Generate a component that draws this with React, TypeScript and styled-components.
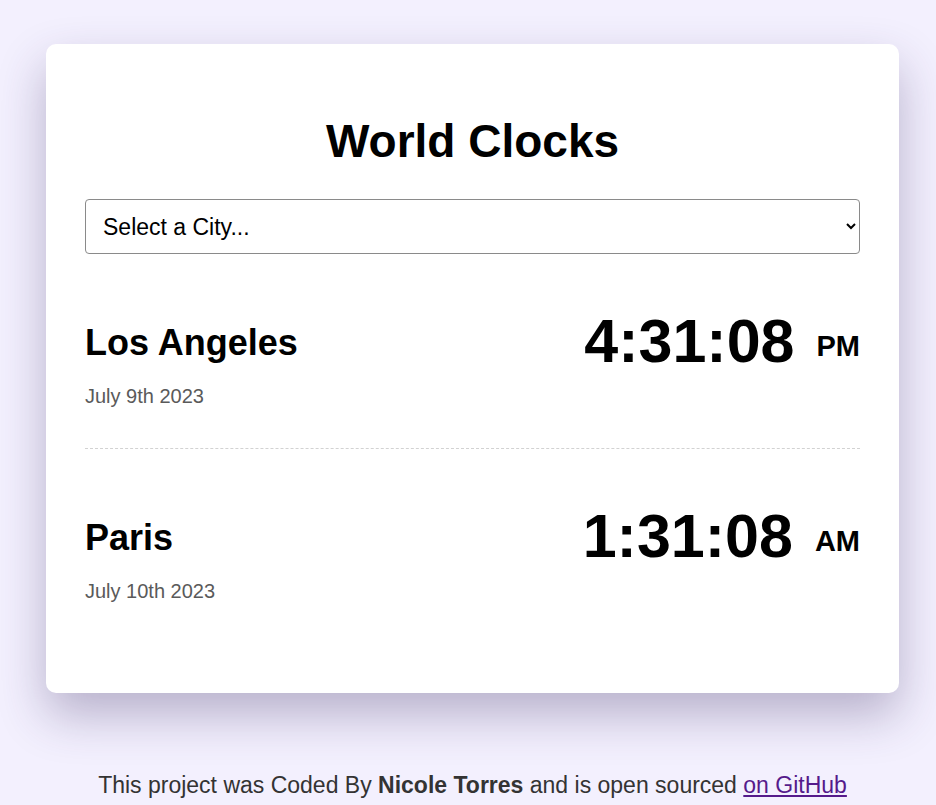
import React from "react";
import styled, { createGlobalStyle } from "styled-components";

const GlobalStyle = createGlobalStyle`
  html, body {
    margin: 0;
    padding: 0;
    background: #f3f0fe;
    font-family: "Liberation Sans", Arial, sans-serif;
  }
`;

const Page = styled.div`
  padding: 44px 37px 0 46px;
  box-sizing: border-box;
  min-height: 805px;
`;

const Card = styled.main`
  background: #ffffff;
  border-radius: 10px;
  box-shadow: 0 22px 48px rgba(60, 45, 95, 0.32);
  padding: 70px 39px 50px 39px;
`;

const Title = styled.h1`
  margin: 0 0 30px 0;
  font-size: 46px;
  line-height: 55px;
  font-weight: 700;
  text-align: center;
  color: #000;
`;

const CitySelect = styled.select`
  display: block;
  width: 100%;
  height: 55px;
  box-sizing: border-box;
  font-family: "Liberation Sans", Arial, sans-serif;
  font-size: 23px;
  color: #000;
  background: #fff;
  border: 1px solid #8a8a8a;
  border-radius: 4px;
  padding: 0 12px 0 13px;
`;

const CityRow = styled.section<{ $last?: boolean }>`
  display: flex;
  justify-content: space-between;
  align-items: flex-start;
  padding: 52px 0 40px 0;
  border-bottom: ${(p) => (p.$last ? "none" : "1px dashed #d2d2d2")};
`;

const CityInfo = styled.div`
  margin-top: 15px;
`;

const CityName = styled.h2`
  margin: 0 0 20px 0;
  font-size: 36px;
  line-height: 43px;
  font-weight: 700;
  color: #000;
`;

const CityDate = styled.div`
  font-size: 20px;
  line-height: 24px;
  color: #5a5a5a;
`;

const Time = styled.div`
  font-size: 61px;
  line-height: 71px;
  font-weight: 700;
  color: #000;
  white-space: nowrap;
`;

const Meridiem = styled.small`
  font-size: 29px;
  line-height: 32px;
  vertical-align: middle;
  margin-left: 5px;
`;

const Footer = styled.footer`
  margin-top: 78px;
  text-align: center;
  font-size: 23px;
  line-height: 28px;
  color: #333;
`;

const Link = styled.a`
  color: #551a8b;
  text-decoration: underline;
`;

const cities = [
  { name: "Los Angeles", date: "July 9th 2023", time: "4:31:08", ampm: "PM" },
  { name: "Paris", date: "July 10th 2023", time: "1:31:08", ampm: "AM" },
];

export default function App() {
  return (
    <>
      <GlobalStyle />
      <Page>
        <Card>
          <Title>World Clocks</Title>
          <CitySelect defaultValue="">
            <option value="">Select a City...</option>
            <option value="tokyo">Tokyo</option>
            <option value="sydney">Sydney</option>
          </CitySelect>
          {cities.map((c, i) => (
            <CityRow key={c.name} $last={i === cities.length - 1}>
              <CityInfo>
                <CityName>{c.name}</CityName>
                <CityDate>{c.date}</CityDate>
              </CityInfo>
              <Time>
                {c.time} <Meridiem>{c.ampm}</Meridiem>
              </Time>
            </CityRow>
          ))}
        </Card>
        <Footer>
          This project was Coded By <strong>Nicole Torres</strong> and is open
          sourced <Link href="#">on GitHub</Link>
        </Footer>
      </Page>
    </>
  );
}
